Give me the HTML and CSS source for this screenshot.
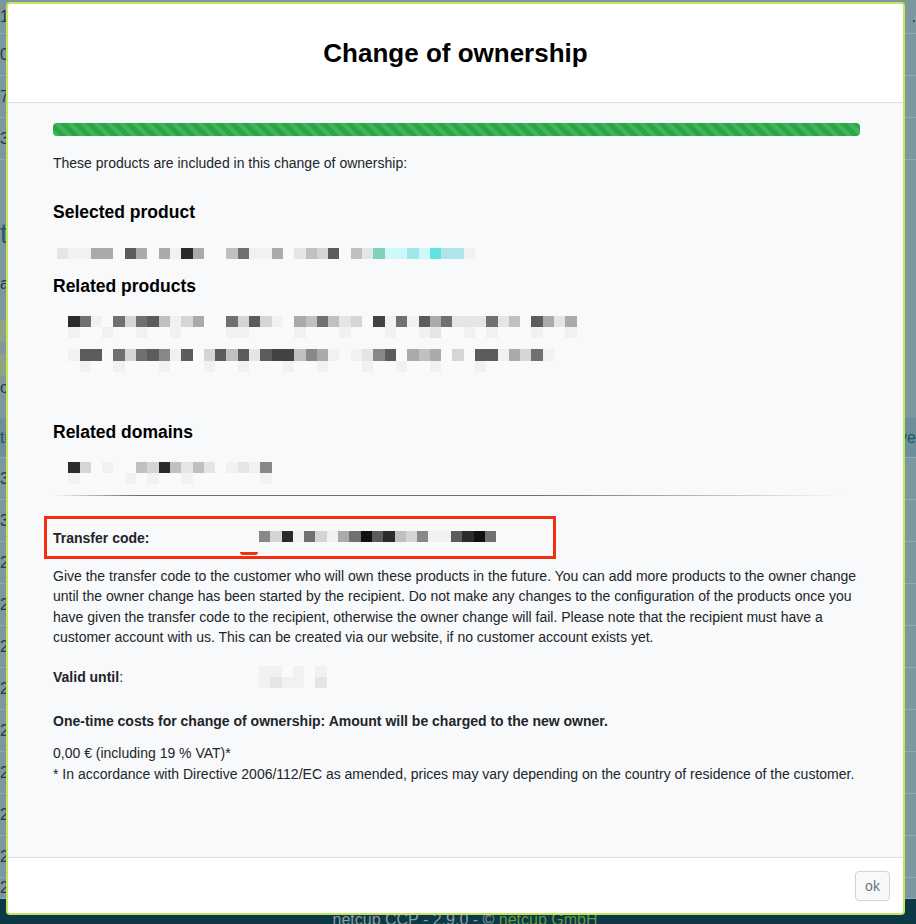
FILE: index.html
```html
<!DOCTYPE html>
<html lang="en">
<head>
    <meta charset="UTF-8">
    <meta name="viewport" content="width=device-width, initial-scale=1.0">
    <title>Change of ownership</title>
    <link rel="stylesheet" href="styles.css">
</head>
<body>
    <!-- page behind the dialog -->
    <div class="backdrop">
        <div class="bg-row first"><span>19</span><span>.</span></div>
        <div class="bg-row"><span>00</span><span></span></div>
        <div class="bg-row"><span>7</span><span></span></div>
        <div class="bg-row"><span>35</span><span></span></div>
        <div class="bg-heading">
            <span class="bg-title">ti</span>
            <span class="bg-small">a</span>
        </div>
        <div class="bg-buttons">
            <span class="bg-btn"></span>
            <span class="bg-btn"></span>
            <span class="bg-small">oi</span>
        </div>
        <div class="bg-thead"><span>ti</span><span>ave</span></div>
        <div class="bg-row"><span>35</span><span></span></div>
        <div class="bg-row"><span>33</span><span></span></div>
        <div class="bg-row"><span>26</span><span></span></div>
        <div class="bg-row"><span>26</span><span></span></div>
        <div class="bg-row"><span>26</span><span></span></div>
        <div class="bg-row"><span>26</span><span></span></div>
        <div class="bg-row"><span>26</span><span></span></div>
        <div class="bg-row"><span>26</span><span></span></div>
        <div class="bg-row"><span>26</span><span></span></div>
        <div class="bg-row"><span>26</span><span></span></div>
        <div class="bg-row last"><span>26</span><span></span></div>
        <div class="site-footer">netcup CCP - 2.9.0 - © <a href="#">netcup GmbH</a></div>
    </div>

    <div class="modal">
        <div class="modal-header">
            <h4 class="modal-title">Change of ownership</h4>
        </div>
        <div class="modal-body">
            <div class="progress"><div class="progress-bar"></div></div>
            <p class="intro">These products are included in this change of ownership:</p>

            <h5 class="section-title">Selected product</h5>
            <div class="mosaic indent gap-selected">
                <div class="mrow"><span class="c"></span><span class="b"></span><span class="b"></span><span class="f"></span><span class="f"></span><span class="a"></span><span class="i"></span><span class="f"></span><span class="a"></span><span class="f"></span><span class="b"></span><span class="k"></span><span class="f"></span><span class="a"></span><span class="a"></span><span class="e"></span><span class="h"></span><span class="b"></span><span class="b"></span><span class="f"></span><span class="a"></span><span class="c"></span><span class="e"></span><span class="d"></span><span class="i"></span><span class="a"></span><span class="e"></span><span class="c"></span><span class="t1"></span><span class="t2"></span><span class="t2"></span><span class="t3"></span><span class="t2"></span><span class="t4"></span><span class="t5"></span><span class="t5"></span><span class="b"></span><span class="a"></span><span class="a"></span></div>
            </div>

            <h5 class="section-title gap-related">Related products</h5>
            <div class="mosaic indent gap-list">
                <div class="mrow"><span class="a"></span><span class="k"></span><span class="h"></span><span class="b"></span><span class="a"></span><span class="h"></span><span class="d"></span><span class="h"></span><span class="i"></span><span class="e"></span><span class="b"></span><span class="d"></span><span class="f"></span><span class="a"></span><span class="a"></span><span class="h"></span><span class="d"></span><span class="i"></span><span class="d"></span><span class="b"></span><span class="a"></span><span class="f"></span><span class="e"></span><span class="h"></span><span class="e"></span><span class="c"></span><span class="d"></span><span class="a"></span><span class="j"></span><span class="b"></span><span class="h"></span><span class="b"></span><span class="i"></span><span class="f"></span><span class="h"></span><span class="c"></span><span class="c"></span><span class="c"></span><span class="h"></span><span class="c"></span><span class="e"></span><span class="a"></span><span class="i"></span><span class="f"></span><span class="c"></span><span class="f"></span></div>
                <div class="mrow"><span class="a"></span><span class="b"></span><span class="a"></span><span class="a"></span><span class="b"></span><span class="a"></span><span class="a"></span><span class="b"></span><span class="a"></span><span class="a"></span><span class="b"></span><span class="a"></span><span class="a"></span><span class="a"></span><span class="a"></span><span class="b"></span><span class="b"></span><span class="a"></span><span class="a"></span><span class="a"></span><span class="a"></span><span class="b"></span><span class="a"></span><span class="a"></span><span class="a"></span><span class="b"></span><span class="a"></span><span class="a"></span><span class="a"></span><span class="b"></span><span class="a"></span><span class="a"></span><span class="b"></span><span class="c"></span><span class="a"></span><span class="a"></span><span class="b"></span><span class="a"></span><span class="b"></span><span class="a"></span><span class="a"></span><span class="a"></span><span class="b"></span><span class="a"></span><span class="a"></span><span class="b"></span></div>
                <div class="mrow second"><span class="a"></span><span class="b"></span><span class="i"></span><span class="i"></span><span class="a"></span><span class="h"></span><span class="d"></span><span class="h"></span><span class="i"></span><span class="g"></span><span class="b"></span><span class="i"></span><span class="a"></span><span class="d"></span><span class="i"></span><span class="e"></span><span class="i"></span><span class="c"></span><span class="i"></span><span class="j"></span><span class="j"></span><span class="e"></span><span class="g"></span><span class="f"></span><span class="b"></span><span class="a"></span><span class="b"></span><span class="c"></span><span class="g"></span><span class="i"></span><span class="a"></span><span class="f"></span><span class="e"></span><span class="f"></span><span class="a"></span><span class="d"></span><span class="a"></span><span class="i"></span><span class="i"></span><span class="b"></span><span class="f"></span><span class="d"></span><span class="h"></span><span class="b"></span></div>
                <div class="mrow"><span class="a"></span><span class="a"></span><span class="b"></span><span class="a"></span><span class="a"></span><span class="b"></span><span class="a"></span><span class="a"></span><span class="a"></span><span class="b"></span><span class="a"></span><span class="a"></span><span class="a"></span><span class="b"></span><span class="a"></span><span class="a"></span><span class="b"></span><span class="a"></span><span class="a"></span><span class="a"></span><span class="b"></span><span class="a"></span><span class="a"></span><span class="b"></span><span class="a"></span><span class="a"></span><span class="a"></span><span class="b"></span><span class="a"></span><span class="a"></span><span class="b"></span><span class="a"></span><span class="a"></span><span class="b"></span><span class="a"></span><span class="a"></span><span class="a"></span><span class="b"></span><span class="a"></span><span class="a"></span><span class="a"></span><span class="a"></span></div>
            </div>

            <h5 class="section-title gap-domains">Related domains</h5>
            <div class="mosaic indent gap-list">
                <div class="mrow"><span class="a"></span><span class="k"></span><span class="d"></span><span class="a"></span><span class="b"></span><span class="a"></span><span class="a"></span><span class="e"></span><span class="d"></span><span class="k"></span><span class="e"></span><span class="c"></span><span class="e"></span><span class="c"></span><span class="a"></span><span class="b"></span><span class="c"></span><span class="b"></span><span class="g"></span></div>
                <div class="mrow"><span class="a"></span><span class="b"></span><span class="a"></span><span class="a"></span><span class="a"></span><span class="a"></span><span class="b"></span><span class="a"></span><span class="b"></span><span class="a"></span><span class="a"></span><span class="b"></span><span class="a"></span><span class="a"></span><span class="a"></span><span class="a"></span><span class="a"></span><span class="a"></span><span class="b"></span></div>
            </div>

            <div class="divider"></div>

            <div class="transfer">
                <span class="label"><b>Transfer code:</b></span>
                <div class="mosaic code">
                    <div class="mrow"><span class="g"></span><span class="d"></span><span class="k"></span><span class="b"></span><span class="h"></span><span class="d"></span><span class="b"></span><span class="f"></span><span class="h"></span><span class="l"></span><span class="i"></span><span class="k"></span><span class="e"></span><span class="d"></span><span class="g"></span><span class="b"></span><span class="b"></span><span class="i"></span><span class="k"></span><span class="l"></span><span class="h"></span></div>
                </div>
                <span class="mark"></span>
            </div>

            <p class="info">Give the transfer code to the customer who will own these products in the future. You can add more products to the owner change until the owner change has been started by the recipient. Do not make any changes to the configuration of the products once you have given the transfer code to the recipient, otherwise the owner change will fail. Please note that the recipient must have a customer account with us. This can be created via our website, if no customer account exists yet.</p>

            <div class="valid">
                <span class="label"><b>Valid until</b>:</span>
                <div class="mosaic">
                    <div class="mrow"><span class="b"></span><span class="b"></span><span class="a"></span><span class="b"></span><span class="a"></span><span class="b"></span><span class="a"></span></div>
                    <div class="mrow"><span class="b"></span><span class="c"></span><span class="b"></span><span class="b"></span><span class="a"></span><span class="c"></span><span class="a"></span></div>
                </div>
            </div>

            <p class="costs"><b>One-time costs for change of ownership: Amount will be charged to the new owner.</b></p>
            <p class="price">0,00 € (including 19 % VAT)*<br>* In accordance with Directive 2006/112/EC as amended, prices may vary depending on the country of residence of the customer.</p>
        </div>
        <div class="modal-footer">
            <button class="btn-ok">ok</button>
        </div>
    </div>
</body>
</html>
```

FILE: styles.css
```css
html, body {
    margin: 0;
    height: 100%;
    overflow: hidden;
}
body {
    font-family: 'Liberation Sans', Arial, Helvetica, sans-serif;
    font-size: 14px;
    background-color: #7c979e;
    color: #212529;
}

/* page behind the dialog */
.backdrop {
    display: flex;
    flex-direction: column;
    color: #243c44;
}
.bg-row {
    height: 41px;
    border-bottom: 1px solid #92a9af;
    display: flex;
    justify-content: space-between;
    align-items: center;
    font-size: 16px;
    flex: none;
}
.bg-row.first {
    height: 33px;
}
.bg-row.last {
    height: 20px;
}
.bg-heading {
    height: 140px;
    display: flex;
    flex-direction: column;
    flex: none;
}
.bg-title {
    margin-top: 58px;
    font-size: 28px;
    line-height: 32px;
    color: #2b5966;
}
.bg-small {
    margin-top: 25px;
    font-size: 16px;
}
.bg-buttons {
    height: 118px;
    display: flex;
    flex-direction: column;
    align-items: flex-start;
    flex: none;
}
.bg-btn {
    width: 11px;
    height: 22px;
    margin-top: 20px;
    background-color: #8ea284;
}
.bg-btn + .bg-btn {
    margin-top: 12px;
}
.bg-buttons .bg-small {
    margin-top: 3px;
}
.bg-thead {
    height: 39px;
    border-bottom: 1px solid #92a9af;
    background-color: #6c8f99;
    display: flex;
    justify-content: space-between;
    align-items: center;
    color: #1d5465;
    font-size: 16px;
    flex: none;
}
.site-footer {
    height: 60px;
    padding: 11px 0 0 14px;
    background-color: #0b3947;
    text-align: center;
    color: #8c9ca2;
    font-size: 16px;
    line-height: 20px;
}
.site-footer a {
    color: #5f9c3c;
    text-decoration: none;
}

/* dialog */
.modal {
    position: fixed;
    left: 6px;
    top: 2px;
    width: 899px;
    height: 913px;
    box-sizing: border-box;
    border: 2px solid #c8e35e;
    border-radius: 4px;
    background-color: #fff;
    display: flex;
    flex-direction: column;
    overflow: hidden;
}
.modal-header {
    height: 98px;
    flex: none;
    border-bottom: 1px solid #dee2e6;
    display: flex;
    align-items: center;
    justify-content: center;
}
.modal-title {
    margin: 0;
    font-size: 26px;
    font-weight: bold;
    color: #000;
}
.modal-body {
    flex: 1;
    background-color: #f8f9fa;
    padding: 20px 43px 0 45px;
}
.modal-footer {
    height: 55px;
    flex: none;
    border-top: 1px solid #dee2e6;
    display: flex;
    align-items: center;
    justify-content: flex-end;
    padding-right: 13px;
}
.btn-ok {
    width: 35px;
    height: 30px;
    padding: 0;
    border: 1px solid #ced4da;
    border-radius: 4px;
    background-color: #f8f9fa;
    color: #6c757d;
    font-family: 'Liberation Sans', Arial, sans-serif;
    font-size: 14px;
    cursor: pointer;
}

.progress {
    height: 13px;
    border-radius: 4px;
    background-color: #e9ecef;
    overflow: hidden;
}
.progress-bar {
    height: 100%;
    background-color: #28a745;
    background-image: linear-gradient(45deg, rgba(255,255,255,.13) 25%, transparent 25%, transparent 50%, rgba(255,255,255,.13) 50%, rgba(255,255,255,.13) 75%, transparent 75%, transparent);
    background-size: 13px 13px;
}
.intro {
    margin: 17px 0 28px;
    line-height: 20px;
}
.section-title {
    margin: 0;
    font-size: 17.5px;
    line-height: 22px;
    font-weight: bold;
    color: #000;
}
.gap-related {
    margin-top: 16px;
}
.gap-domains {
    margin-top: 49px;
}

/* blurred placeholder values */
.mosaic {
    display: flex;
    flex-direction: column;
}
.mosaic.indent {
    margin-left: 4px;
}
.gap-selected {
    margin-top: 25px;
}
.gap-list {
    margin-top: 19px;
}
.mrow {
    display: flex;
}
.mrow span {
    flex: none;
    width: 11.3px;
    height: 11px;
}
.mrow.second {
    margin-top: 11px;
    height: 12px;
}
.mrow.second span {
    height: 12px;
}
.mosaic .a { background-color: #fafafa; }
.mosaic .b { background-color: #f1f1f1; }
.mosaic .c { background-color: #e5e5e5; }
.mosaic .d { background-color: #d5d5d5; }
.mosaic .e { background-color: #c0c0c0; }
.mosaic .f { background-color: #aaaaaa; }
.mosaic .g { background-color: #888888; }
.mosaic .h { background-color: #707070; }
.mosaic .i { background-color: #5c5c5c; }
.mosaic .j { background-color: #424242; }
.mosaic .k { background-color: #2b2b2b; }
.mosaic .l { background-color: #111111; }
.mosaic .t1 { background-color: #80d0c0; }
.mosaic .t2 { background-color: #cdf9f9; }
.mosaic .t3 { background-color: #a0e8e8; }
.mosaic .t4 { background-color: #62e2e2; }
.mosaic .t5 { background-color: #b0e4ec; }

.divider {
    height: 1px;
    margin-top: 11px;
    background: linear-gradient(to right, rgba(0,0,0,0) 0, rgba(0,0,0,.55) 10%, rgba(0,0,0,.55) 60%, rgba(0,0,0,0) 98%);
}

.transfer {
    position: relative;
    margin: 20px 0 0 -9px;
    width: 512px;
    height: 43px;
    box-sizing: border-box;
    border: 3px solid #f42f10;
    padding-left: 6px;
    display: flex;
    align-items: center;
}
.label {
    width: 206px;
    flex: none;
}
.transfer .code {
    margin-top: -3px;
}
.mark {
    position: absolute;
    left: 193px;
    top: 33px;
    width: 18px;
    height: 3px;
    background-color: #f42f10;
    border-radius: 0 0 9px 9px;
}

.info {
    margin: 7px 0 0;
    line-height: 20.33px;
}
.valid {
    margin-top: 19px;
    display: flex;
    align-items: center;
    line-height: 20px;
}
.costs {
    margin: 23px 0 0;
    line-height: 20px;
}
.price {
    margin: 12px 0 0;
    line-height: 21px;
}
```
